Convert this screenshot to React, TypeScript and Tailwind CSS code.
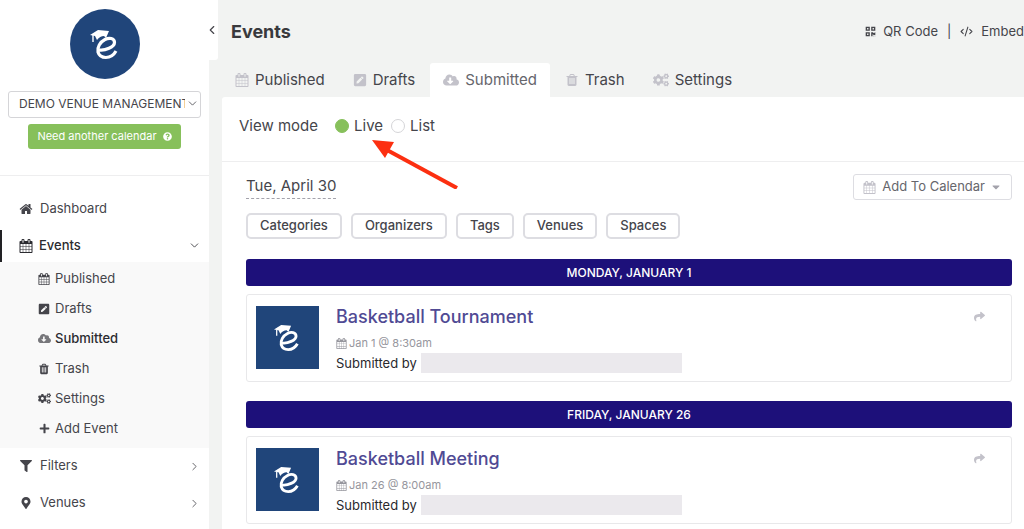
import type { ReactNode } from 'react';
import {
  FaCaretDown,
  FaCloudDownloadAlt,
  FaCogs,
  FaFilter,
  FaMapMarkerAlt,
  FaPenSquare,
  FaPlus,
  FaQrcode,
  FaQuestionCircle,
  FaShare
} from 'react-icons/fa';
import { ChevronDown, ChevronLeft, ChevronRight, CodeXml } from 'lucide-react';

interface NavItem {
  label: string;
  icon: ReactNode;
  active?: boolean;
}

interface EventDay {
  day: string;
  title: string;
  time: string;
}

interface IconProps {
  className?: string;
}

function CalendarIcon({ className }: IconProps) {
  return (
    <svg viewBox="0 0 1792 1792" fill="currentColor" className={className} aria-hidden="true">
      <path d="M192 1664h288v-288h-288v288zm352 0h320v-288h-320v288zm-352-352h288v-320h-288v320zm352 0h320v-320h-320v320zm-352-384h288v-288h-288v288zm736 736h320v-288h-320v288zm-384-736h320v-288h-320v288zm768 736h288v-288h-288v288zm-384-352h320v-320h-320v320zm-352-864v-288q0-13-9.5-22.5t-22.5-9.5h-64q-13 0-22.5 9.5t-9.5 22.5v288q0 13 9.5 22.5t22.5 9.5h64q13 0 22.5-9.5t9.5-22.5zm736 864h288v-320h-288v320zm-384-384h320v-288h-320v288zm384 0h288v-288h-288v288zm32-480v-288q0-13-9.5-22.5t-22.5-9.5h-64q-13 0-22.5 9.5t-9.5 22.5v288q0 13 9.5 22.5t22.5 9.5h64q13 0 22.5-9.5t9.5-22.5zm384-64v1280q0 52-38 90t-90 38h-1408q-52 0-90-38t-38-90v-1280q0-52 38-90t90-38h128v-96q0-66 47-113t113-47h64q66 0 113 47t47 113v96h384v-96q0-66 47-113t113-47h64q66 0 113 47t47 113v96h128q52 0 90 38t38 90z" />
    </svg>
  );
}

function HomeIcon({ className }: IconProps) {
  return (
    <svg viewBox="0 0 1792 1792" fill="currentColor" className={className} aria-hidden="true">
      <path d="M1472 992v480q0 26-19 45t-45 19h-384v-384h-256v384h-384q-26 0-45-19t-19-45v-480q0-1 .5-3t.5-3l575-474 575 474q1 2 1 6zm223-69l-62 74q-8 9-21 11h-3q-13 0-21-7l-692-577-692 577q-12 8-24 7-13-2-21-11l-62-74q-8-10-7-23.5t11-21.5l719-599q32-26 76-26t76 26l244 204v-195q0-14 9-23t23-9h192q14 0 23 9t9 23v408l219 182q10 8 11 21.5t-7 23.5z" />
    </svg>
  );
}

function TrashIcon({ className }: IconProps) {
  return (
    <svg viewBox="0 0 1792 1792" fill="currentColor" className={className} aria-hidden="true">
      <path d="M704 1376v-704q0-14-9-23t-23-9h-64q-14 0-23 9t-9 23v704q0 14 9 23t23 9h64q14 0 23-9t9-23zm256 0v-704q0-14-9-23t-23-9h-64q-14 0-23 9t-9 23v704q0 14 9 23t23 9h64q14 0 23-9t9-23zm256 0v-704q0-14-9-23t-23-9h-64q-14 0-23 9t-9 23v704q0 14 9 23t23 9h64q14 0 23-9t9-23zm-544-992h448l-48-117q-7-9-17-11h-317q-10 2-17 11zm928 32v64q0 14-9 23t-23 9h-96v948q0 83-47 143.5t-113 60.5h-832q-66 0-113-58.5t-47-141.5v-952h-96q-14 0-23-9t-9-23v-64q0-14 9-23t23-9h309l70-167q15-37 54-63t79-26h320q40 0 79 26t54 63l70 167h309q14 0 23 9t9 23z" />
    </svg>
  );
}

function LogoMark({ className }: IconProps) {
  return (
    <svg viewBox="0 0 70 70" fill="none" className={className} aria-hidden="true">
      <path d="M20 26 28 21 39 22 36 29 34 27Q30 27 27 31L25 27Z" fill="white" />
      <path d="M23 26v7" stroke="white" strokeWidth="1.4" />
      <path
        d="M29 41C35 42 44.5 38 44.5 33.5C44.5 29 39 28.5 35 30.5C30 33 27 38.5 28 43C30 50 41 51 46 42"
        stroke="white"
        strokeWidth="3.2"
      />
    </svg>
  );
}

const tabs: NavItem[] = [
  { label: 'Published', icon: <CalendarIcon className="size-[14px]" /> },
  { label: 'Drafts', icon: <FaPenSquare className="size-[14px]" /> },
  { label: 'Submitted', icon: <FaCloudDownloadAlt className="size-4" />, active: true },
  { label: 'Trash', icon: <TrashIcon className="size-[14px]" /> },
  { label: 'Settings', icon: <FaCogs className="size-4" /> }
];

const eventLinks: NavItem[] = [
  { label: 'Published', icon: <CalendarIcon className="size-3" /> },
  { label: 'Drafts', icon: <FaPenSquare className="size-3" /> },
  { label: 'Submitted', icon: <FaCloudDownloadAlt className="size-[13px] text-[#77777b]" />, active: true },
  { label: 'Trash', icon: <TrashIcon className="size-3" /> },
  { label: 'Settings', icon: <FaCogs className="size-[13px]" /> },
  { label: 'Add Event', icon: <FaPlus className="size-[11px]" /> }
];

const filters = ['Categories', 'Organizers', 'Tags', 'Venues', 'Spaces'];

const days: EventDay[] = [
  { day: 'MONDAY, JANUARY 1', title: 'Basketball Tournament', time: 'Jan 1 @ 8:30am' },
  { day: 'FRIDAY, JANUARY 26', title: 'Basketball Meeting', time: 'Jan 26 @ 8:00am' }
];

function Sidebar() {
  return (
    <aside className="relative w-[209px] shrink-0 bg-white">
      <button
        type="button"
        aria-label="Collapse sidebar"
        className="absolute top-0 left-full flex h-[60px] w-[9px] items-center rounded-br-[3px] bg-white"
      >
        <ChevronLeft className="-ml-1 size-[14px] shrink-0" />
      </button>

      <div className="flex flex-col items-center border-b border-[#eeeeef] px-2 pt-[9px] pb-[26px]">
        <div className="size-[70px] rounded-full bg-[#20457a]">
          <LogoMark className="size-full" />
        </div>
        <div className="relative mt-[11px] w-full">
          <select
            aria-label="Calendar"
            className="h-[27px] w-full appearance-none rounded-[3px] border border-[#d5d5d8] bg-white pr-[15px] pl-[10px] text-xs"
          >
            <option>DEMO VENUE MANAGEMENT</option>
          </select>
          <ChevronDown className="pointer-events-none absolute top-[7px] right-[2px] size-[13px]" strokeWidth={1.5} />
        </div>
        <button
          type="button"
          className="mt-[6px] flex h-[25px] items-center gap-[6px] rounded-[3px] bg-[#87c05b] px-[9px] text-[11px] text-white"
        >
          Need another calendar
          <FaQuestionCircle className="size-[9px]" />
        </button>
      </div>

      <nav className="pt-[14px] text-[13px]">
        <a href="#dashboard" className="flex h-[38px] items-center gap-[7px] pl-[19px]">
          <HomeIcon className="size-[14px]" />
          Dashboard
        </a>
        <a
          href="#events"
          className="mt-[2px] flex h-8 items-center border-l-2 border-[#222225] pr-2 pl-[17px] font-medium text-[#2b2b30]"
        >
          <CalendarIcon className="mr-[6px] size-[14px]" />
          Events
          <ChevronDown className="ml-auto size-[13px]" strokeWidth={1.5} />
        </a>
        <ul className="bg-[#f9f9f9] pt-[2px] pb-1">
          {eventLinks.map((item) => (
            <li key={item.label}>
              <a
                href={`#${item.label}`}
                className={`flex h-[30px] items-center gap-1 pl-[37px] ${item.active ? 'font-medium text-[#2b2b30]' : ''}`}
              >
                <span className="flex w-[14px] justify-center">{item.icon}</span>
                {item.label}
              </a>
            </li>
          ))}
        </ul>
        <a href="#filters" className="flex h-[37px] items-center pr-2 pl-5">
          <FaFilter className="mr-2 size-3" />
          Filters
          <ChevronRight className="ml-auto size-[13px]" strokeWidth={1.5} />
        </a>
        <a href="#venues" className="flex h-[37px] items-center pr-2 pl-5">
          <FaMapMarkerAlt className="mr-2 size-3" />
          Venues
          <ChevronRight className="ml-auto size-[13px]" strokeWidth={1.5} />
        </a>
      </nav>
    </aside>
  );
}

function EventCard({ day, title, time }: EventDay) {
  return (
    <section className="mb-[19px]">
      <h2 className="flex h-[27px] items-center justify-center rounded-[3px] bg-[#1d107a] text-xs font-medium text-white">
        {day}
      </h2>
      <article className="mt-2 flex h-[88px] rounded-[3px] border border-[#e8e8ea] pt-[11px] pr-[26px] pl-[9px]">
        <div className="size-[63px] shrink-0 bg-[#20457a]">
          <LogoMark className="size-full" />
        </div>
        <div className="ml-[17px] min-w-0 flex-1">
          <h3 className="text-lg leading-[22px] font-medium text-[#504a94]">{title}</h3>
          <p className="mt-[7px] flex items-center gap-[2px] text-[11px] leading-4 text-[#96969d]">
            <CalendarIcon className="size-[11px]" />
            {time}
          </p>
          <div className="mt-[2px] flex items-center gap-1 text-[13px] leading-5 text-[#29292d]">
            Submitted by
            <span className="h-5 w-[261px] bg-[#ebe9ed]" />
          </div>
        </div>
        <button type="button" aria-label="Share event" className="h-5 text-[#c3c2ca]">
          <FaShare className="size-[11px]" />
        </button>
      </article>
    </section>
  );
}

export default function App() {
  return (
    <div className="flex h-screen overflow-hidden bg-[#f2f3f2] font-[Inter,'Open_Sans',sans-serif] text-[#45454b]">
      <Sidebar />

      <main className="ml-[13px] flex min-w-0 flex-1 flex-col">
        <header className="flex h-[63px] shrink-0 items-center justify-between pl-[9px]">
          <h1 className="text-lg font-bold text-[#39393d]">Events</h1>
          <div className="flex items-center text-[13px]">
            <a href="#qr" className="flex items-center gap-[7px]">
              <FaQrcode className="size-[11px]" />
              QR Code
            </a>
            <span className="mx-[9px]">|</span>
            <a href="#embed" className="flex items-center gap-2">
              <CodeXml className="size-[13px]" />
              Embed
            </a>
          </div>
        </header>

        <nav className="flex h-[34px] shrink-0 gap-[2px] text-[15px]">
          {tabs.map((tab) => (
            <a
              key={tab.label}
              href={`#tab-${tab.label}`}
              className={`flex items-center gap-[6px] rounded-t-[3px] px-[13px] ${tab.active ? 'bg-white text-[#66666c]' : ''}`}
            >
              <span className="text-[#c3c2ca]">{tab.icon}</span>
              {tab.label}
            </a>
          ))}
        </nav>

        <div className="relative flex-1 rounded-tl-[3px] bg-white">
          <fieldset className="flex h-[65px] items-center border-b border-[#eeeeef] pb-[6px] pl-[17px] text-[15px]">
            <span className="mr-[17px]">View mode</span>
            <label className="mr-2 flex items-center gap-[5px]">
              <input
                type="radio"
                name="view"
                defaultChecked
                className="size-[14px] appearance-none rounded-full border border-[#d5d5d8] bg-white checked:border-[#87c05b] checked:bg-[#87c05b]"
              />
              Live
            </label>
            <label className="flex items-center gap-[5px]">
              <input
                type="radio"
                name="view"
                className="size-[14px] appearance-none rounded-full border border-[#d5d5d8] bg-white checked:border-[#87c05b] checked:bg-[#87c05b]"
              />
              List
            </label>
          </fieldset>

          {/* pointer to the Live option */}
          <svg
            viewBox="0 0 88 50"
            className="pointer-events-none absolute top-[42px] left-[149px] h-[50px] w-[88px]"
            aria-hidden="true"
          >
            <path d="M16 11 86 49" stroke="#fc2f10" strokeWidth="4" />
            <path d="M1 1 23 3 14 19Z" fill="#fc2f10" />
          </svg>

          <div className="pt-3 pr-3 pl-6">
            <div className="flex items-start justify-between">
              <button type="button" className="border-b border-dashed border-[#a3a2ab] text-[15px] leading-6">
                Tue, April 30
              </button>
              <button
                type="button"
                className="flex h-[26px] items-center rounded-[3px] border border-[#dddde2] px-[9px] text-[13px] text-[#66666c]"
              >
                <CalendarIcon className="mr-[6px] size-[13px] text-[#c3c2ca]" />
                Add To Calendar
                <FaCaretDown className="ml-[5px] size-3 text-[#a3a2ab]" />
              </button>
            </div>

            <div className="mt-[13px] mb-5 flex gap-[9px]">
              {filters.map((name) => (
                <button
                  key={name}
                  type="button"
                  className="h-[26px] rounded-[5px] border-2 border-[#dddde2] px-3 text-[13px] font-medium text-[#45454b]"
                >
                  {name}
                </button>
              ))}
            </div>

            {days.map((item) => (
              <EventCard key={item.title} {...item} />
            ))}
          </div>
        </div>
      </main>
    </div>
  );
}
